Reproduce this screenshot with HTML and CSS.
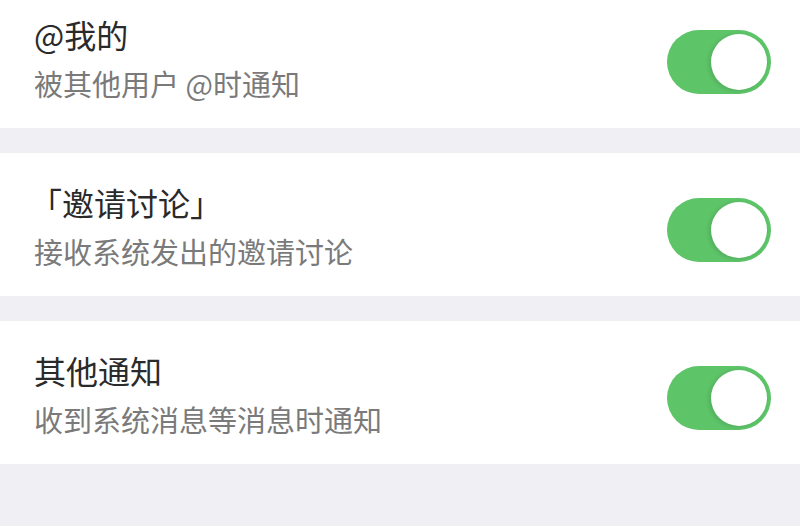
FILE: index.html
```html
<!DOCTYPE html>
<html lang="zh-CN">
<head>
<meta charset="utf-8">
<link rel="stylesheet" href="styles.css">
</head>
<body>
<div class="list">
  <div class="item">
    <div class="text">
      <div class="title">@我的</div>
      <div class="sub">被其他用户 @时通知</div>
    </div>
    <div class="toggle on"><div class="knob"></div></div>
  </div>
  <div class="item">
    <div class="text">
      <div class="title bracket">「邀请讨论」</div>
      <div class="sub">接收系统发出的邀请讨论</div>
    </div>
    <div class="toggle on"><div class="knob"></div></div>
  </div>
  <div class="item">
    <div class="text">
      <div class="title">其他通知</div>
      <div class="sub">收到系统消息等消息时通知</div>
    </div>
    <div class="toggle on"><div class="knob"></div></div>
  </div>
</div>
</body>
</html>
```
FILE: styles.css
```css
html, body {
  margin: 0;
  padding: 0;
  background: #efeff4;
  width: 800px;
  height: 526px;
  overflow: hidden;
  font-family: "Noto Sans CJK SC", "Noto Sans", sans-serif;
}
.list {
  margin-top: -15px;
  display: flex;
  flex-direction: column;
  gap: 25px;
}
.item {
  background: #fff;
  height: 143px;
  box-sizing: border-box;
  padding: 10px 29px 0 34px;
  display: flex;
  align-items: center;
  justify-content: space-between;
}
.text {
  display: flex;
  flex-direction: column;
  padding-bottom: 8px;
}
.title {
  font-size: 32px;
  line-height: 44px;
  color: #2a2a2a;
}
.bracket {
  margin-left: -4px;
}
.sub {
  font-size: 29px;
  line-height: 40px;
  color: #7a7a7a;
  margin-top: 7px;
}
.toggle {
  width: 104px;
  height: 64px;
  border-radius: 32px;
  background: #5dc468;
  box-sizing: border-box;
  padding: 4px;
  display: flex;
  justify-content: flex-end;
  align-items: center;
}
.knob {
  width: 56px;
  height: 56px;
  border-radius: 50%;
  background: #fff;
  box-shadow: -2px 1px 4px rgba(0, 0, 0, 0.12);
}
```
